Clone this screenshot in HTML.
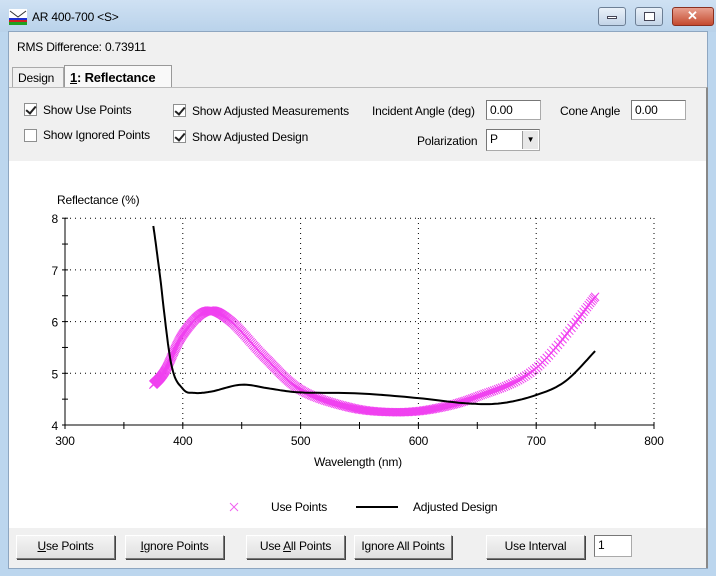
<!DOCTYPE html>
<html><head><style>
*{margin:0;padding:0;box-sizing:border-box}
body{width:716px;height:576px;overflow:hidden;background:#bcd6ee;font-family:"Liberation Sans",sans-serif;font-size:12px;letter-spacing:-0.2px;color:#000;position:relative}
.tb{position:absolute;left:0;top:0;width:716px;height:32px;background:linear-gradient(#cfe1f3,#b9d2ea)}
.win{position:absolute;left:8px;top:31px;width:700px;height:538px;background:#f0f0f0;border:1px solid #8ea6c0}
.abs{position:absolute;white-space:nowrap}
.cb{position:absolute;width:13px;height:13px;border:1px solid #8e8f8f;background:#fff}
.cb.c::after{content:"";position:absolute;left:3px;top:0px;width:4px;height:8px;border:solid #222;border-width:0 2px 2px 0;transform:rotate(40deg)}
.inp{position:absolute;height:20px;background:#fff;border:1px solid #aaa;border-top-color:#777;border-left-color:#777;padding:2px 3px;font-size:12px}
.btn{position:absolute;top:535px;height:24px;background:linear-gradient(#f4f4f4,#e0e0e0);border:1px solid #777;border-top-color:#fff;border-left-color:#fff;box-shadow:1px 1px 0 #444;text-align:center;line-height:21px;font-size:12px}
.wb{position:absolute;top:7px;height:19px;border:1px solid #6d7f95;border-radius:3px;background:linear-gradient(#eaf1f9,#c3d4e7)}
</style></head><body>
<div class="tb"></div>
<svg class="abs" style="left:9px;top:9px" width="18" height="16"><rect x="0" y="0" width="18" height="16" fill="#fff"/><path d="M1 2 L9 8 L17 2" stroke="#333" fill="none"/><rect x="0" y="9" width="18" height="2" fill="#2030d0"/><rect x="0" y="11" width="18" height="2" fill="#d02020"/><rect x="0" y="13" width="18" height="3" fill="#20a020"/></svg>
<div class="abs" style="left:32px;top:10px;font-size:12px">AR 400-700 &lt;S&gt;</div>
<div class="wb" style="left:598px;width:28px"><div style="position:absolute;left:8px;top:8px;width:10px;height:3px;background:#fff;border:1px solid #445"></div></div>
<div class="wb" style="left:635px;width:28px"><div style="position:absolute;left:8px;top:4px;width:11px;height:9px;border:1px solid #445;background:#fff"></div></div>
<div class="wb" style="left:672px;width:42px;background:linear-gradient(#e8a08f,#c44a2f);border-color:#8a3020"><div style="position:absolute;left:14px;top:0;color:#fff;font-weight:bold;font-size:13px">✕</div></div>
<div class="win">
<div class="abs" style="left:8px;top:8px">RMS Difference: 0.73911</div>
<div class="abs" style="left:3px;top:35px;width:52px;height:20px;border:1px solid #aaa;border-bottom:none;background:#f0f0f0;padding:3px 0 0 5px">Design</div>
<div class="abs" style="left:55px;top:33px;width:108px;height:23px;border:1px solid #999;border-bottom:none;background:#f9f9f9;padding:4px 0 0 5px;font-weight:bold;font-size:13px"><u>1</u>: Reflectance</div>
<div class="abs" style="left:0;top:55px;width:699px;height:481px;border-top:1px solid #bbb;border-right:2px solid #888"></div>
<div class="cb c" style="left:15px;top:71px"></div><div class="abs" style="left:34px;top:71px">Show Use Points</div>
<div class="cb" style="left:15px;top:97px"></div><div class="abs" style="left:34px;top:96px">Show Ignored Points</div>
<div class="cb c" style="left:164px;top:72px"></div><div class="abs" style="left:183px;top:72px">Show Adjusted Measurements</div>
<div class="cb c" style="left:164px;top:98px"></div><div class="abs" style="left:183px;top:98px">Show Adjusted Design</div>
<div class="abs" style="left:363px;top:72px">Incident Angle (deg)</div>
<div class="inp" style="left:477px;top:68px;width:55px">0.00</div>
<div class="abs" style="left:551px;top:72px">Cone Angle</div>
<div class="inp" style="left:622px;top:68px;width:55px">0.00</div>
<div class="abs" style="left:408px;top:102px">Polarization</div>
<div class="inp" style="left:477px;top:97px;width:54px;height:22px">P<div style="position:absolute;right:1px;top:1px;width:16px;height:18px;background:#e8e8e8;border-left:1px solid #999;font-size:8px;text-align:center;line-height:18px">▼</div></div>
<div class="abs" style="left:0;top:129px;width:697px;height:367px;background:#fff"></div>
<div class="btn" style="left:7px;top:503px;width:99px"><u>U</u>se Points</div>
<div class="btn" style="left:116px;top:503px;width:99px"><u>I</u>gnore Points</div>
<div class="btn" style="left:237px;top:503px;width:99px">Use <u>A</u>ll Points</div>
<div class="btn" style="left:345px;top:503px;width:98px">I<u>g</u>nore All Points</div>
<div class="btn" style="left:477px;top:503px;width:99px">Use Interval</div>
<div class="inp" style="left:585px;top:503px;width:38px;height:22px">1</div>
</div>
<svg id="p" class="abs" style="left:0;top:0" width="716" height="576" font-family="Liberation Sans" font-size="12" letter-spacing="-0.2"></svg>
<script>
const s=document.getElementById('p');let h='';
const X=w=>65+(w-300)*1.178, Y=v=>425-(v-4)*51.7;
for(let w=400;w<=800;w+=100)h+=`<line x1="${X(w)}" y1="218" x2="${X(w)}" y2="425" stroke="#000" stroke-dasharray="1 4"/>`;
for(let v=5;v<=8;v++)h+=`<line x1="65" y1="${Y(v)}" x2="654" y2="${Y(v)}" stroke="#000" stroke-dasharray="1 4"/>`;
h+=`<line x1="65" y1="218" x2="65" y2="425" stroke="#000"/><line x1="65" y1="425" x2="654" y2="425" stroke="#000"/>`;
for(let w=300;w<=800;w+=50)h+=`<line x1="${X(w)}" y1="422" x2="${X(w)}" y2="429" stroke="#000"/>`;
for(let v=4;v<=8;v+=0.5)h+=`<line x1="62" y1="${Y(v)}" x2="68" y2="${Y(v)}" stroke="#000"/>`;
for(let w=300;w<=800;w+=100)h+=`<text x="${X(w)}" y="445" text-anchor="middle">${w}</text>`;
for(let v=4;v<=8;v++)h+=`<text x="58" y="${Y(v)+5}" text-anchor="end">${v}</text>`;
h+=`<text x="57" y="204">Reflectance (%)</text><text x="358" y="466" text-anchor="middle">Wavelength (nm)</text>`;
function cr(pts,n){const out=[];for(let i=0;i<pts.length-1;i++){const p0=pts[Math.max(0,i-1)],p1=pts[i],p2=pts[i+1],p3=pts[Math.min(pts.length-1,i+2)];for(let k=0;k<n;k++){const t=k/n,t2=t*t,t3=t2*t;const f=(a,b,c,d)=>0.5*(2*b+(-a+c)*t+(2*a-5*b+4*c-d)*t2+(-a+3*b-3*c+d)*t3);out.push([f(p0[0],p1[0],p2[0],p3[0]),f(p0[1],p1[1],p2[1],p3[1])])}}out.push(pts[pts.length-1]);return out}
const P=[[375,4.78],[385,5.05],[400,5.75],[420,6.2],[440,6.02],[470,5.3],[500,4.68],[540,4.35],[575,4.25],[610,4.3],[650,4.55],[700,5.1],[750,6.48]];
const B=[[375,7.85],[380,7.0],[390,5.2],[400,4.7],[410,4.62],[425,4.65],[450,4.78],[475,4.7],[500,4.63],[550,4.61],[600,4.52],[640,4.42],[670,4.42],[700,4.58],[725,4.85],[750,5.43]];
const pp=cr(P,30);
for(const [w,v] of pp){const x=X(w),y=Y(v);h+=`<path d="M${x-4} ${y-4}L${x+4} ${y+4}M${x+4} ${y-4}L${x-4} ${y+4}" stroke="#f040f0" stroke-width="1"/>`}
let d='';for(const [w,v] of cr(B,12)){d+=(d?'L':'M')+X(w).toFixed(1)+' '+Y(v).toFixed(1)}
h+=`<path d="${d}" stroke="#000" stroke-width="2" fill="none"/>`;
h+=`<path d="M230 503L238 511M238 503L230 511" stroke="#f060f0"/><text x="271" y="511">Use Points</text><line x1="356" y1="507" x2="398" y2="507" stroke="#000" stroke-width="2"/><text x="413" y="511">Adjusted Design</text>`;
s.innerHTML=h;
</script>
</body></html>
